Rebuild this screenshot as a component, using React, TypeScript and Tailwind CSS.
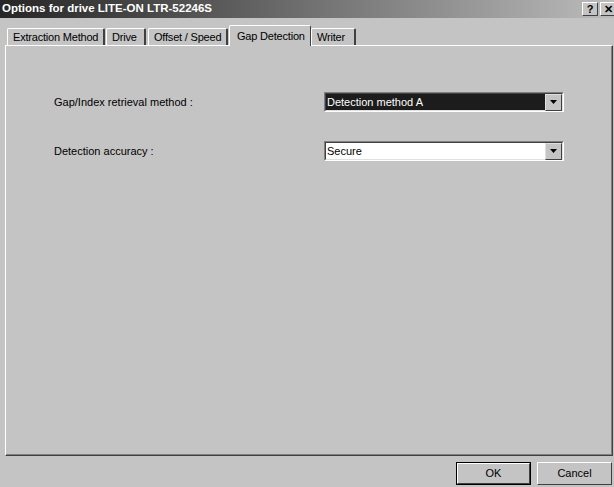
import React from "react";

const FONT = { fontFamily: '"Liberation Sans", Arial, sans-serif' };

type Tab = { label: string; width: string; gap: string; active?: boolean };

const TABS: Tab[] = [
  { label: "Extraction Method", width: "w-[98px]", gap: "ml-0" },
  { label: "Drive", width: "w-[40px]", gap: "ml-[1px]" },
  { label: "Offset / Speed", width: "w-[80px]", gap: "ml-[2px]" },
  { label: "Gap Detection", width: "w-[82px]", gap: "ml-[1px]", active: true },
  { label: "Writer", width: "w-[45px]", gap: "ml-0" },
];

function CaptionButton({ children }: { children: React.ReactNode }) {
  return (
    <div className="w-[16px] h-[14px] bg-[#c4c4c4] border border-t-white border-l-white border-r-[#404040] border-b-[#404040] flex items-center justify-center text-[11px] font-bold leading-none text-black">
      {children}
    </div>
  );
}

function TabButton({ tab }: { tab: Tab }) {
  if (tab.active) {
    return (
      <div
        className={`${tab.width} ${tab.gap} relative z-10 -mb-[1px] h-[21px] bg-[#c4c4c4] border-t border-l border-r border-t-white border-l-white border-r-[#404040] rounded-t-[2px] flex items-start pt-[2px] pl-[7px] text-[11px] tracking-[-0.2px] text-black`}
      >
        {tab.label}
      </div>
    );
  }
  return (
    <div
      className={`${tab.width} ${tab.gap} h-[17px] bg-[#c4c4c4] border-t border-l border-r-2 border-t-white border-l-white border-r-[#404040] rounded-t-[2px] flex items-center pl-[5px] pt-[1px] text-[11px] tracking-[-0.2px] text-black`}
    >
      {tab.label}
    </div>
  );
}

function DropArrow() {
  return (
    <div className="w-[17px] h-[17px] bg-[#c4c4c4] border border-t-[#e0e0e0] border-l-[#e0e0e0] border-r-[#404040] border-b-[#404040] flex items-center justify-center">
      <svg width="7" height="4" viewBox="0 0 7 4">
        <path d="M0 0h7L3.5 4z" fill="#000" />
      </svg>
    </div>
  );
}

function Combo({ value, focused }: { value: string; focused?: boolean }) {
  return (
    <div className="w-[240px] h-[20px] border border-t-[#808080] border-l-[#808080] border-r-white border-b-white">
      <div className="h-full border border-t-[#404040] border-l-[#404040] border-r-[#e0e0e0] border-b-[#e0e0e0] bg-white flex items-stretch">
        <div
          className={`flex-1 flex items-center pl-[1px] text-[11px] ${
            focused ? "bg-[#1c1c1c] text-white" : "bg-white text-black"
          }`}
        >
          {value}
        </div>
        <div className={`flex items-center ${focused ? "bg-[#1c1c1c]" : "bg-white"}`}>
          <DropArrow />
        </div>
      </div>
    </div>
  );
}

function PushButton({ label, isDefault }: { label: string; isDefault?: boolean }) {
  return (
    <div
      className={`w-[75px] h-[23px] ${isDefault ? "border border-black" : ""}`}
    >
      <div className="h-full border border-t-white border-l-white border-r-[#404040] border-b-[#404040] bg-[#c4c4c4] flex items-center justify-center text-[11px] text-black">
        {label}
      </div>
    </div>
  );
}

export default function App() {
  return (
    <div className="w-[614px] h-[487px] bg-[#c4c4c4] flex flex-col overflow-hidden" style={FONT}>
      <div className="h-[18px] bg-gradient-to-r from-[#262626] via-[#707070] to-[#bcbcbc] flex items-center pl-[2px] pr-0">
        <span className="text-white font-bold text-[11.5px] leading-none">
          Options for drive LITE-ON LTR-52246S
        </span>
        <div className="ml-auto flex gap-[2px] mr-[-2px]">
          <CaptionButton>?</CaptionButton>
          <CaptionButton>✕</CaptionButton>
        </div>
      </div>

      <div className="flex flex-col pl-[5px] pr-[1px] pt-[7px]">
        <div className="h-[20px] flex items-end pl-[2px]">
          {TABS.map((t) => (
            <TabButton key={t.label} tab={t} />
          ))}
        </div>

        <div className="h-[411px] border border-t-white border-l-white border-r-[#404040] border-b-[#404040]">
          <div className="h-full border-r border-b border-r-[#808080] border-b-[#808080] flex flex-col pt-[46px] pl-[48px] gap-[29px]">
            <div className="flex items-center">
              <span className="w-[270px] text-[11px] text-black">Gap/Index retrieval method :</span>
              <Combo value="Detection method A" focused />
            </div>
            <div className="flex items-center">
              <span className="w-[270px] text-[11px] text-black">Detection accuracy :</span>
              <Combo value="Secure" />
            </div>
          </div>
        </div>

        <div className="flex justify-end gap-[6px] pt-[6px] pr-[1px]">
          <PushButton label="OK" isDefault />
          <PushButton label="Cancel" />
        </div>
      </div>
    </div>
  );
}
